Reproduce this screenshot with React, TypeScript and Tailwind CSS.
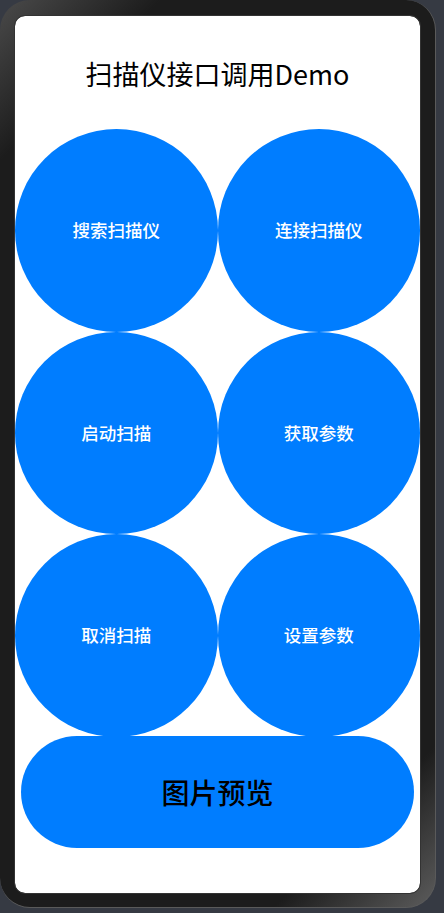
import React from "react";

const circles = ["搜索扫描仪", "连接扫描仪", "启动扫描", "获取参数", "取消扫描", "设置参数"];

const App: React.FC = () => {
	return (
		<div className="w-[444px] h-[913px] bg-[#363a43] overflow-hidden" style={{ fontFamily: '"Noto Sans CJK SC", "Noto Sans", sans-serif' }}>
			<div className="w-[436px] h-[908px] rounded-[30px] bg-[linear-gradient(135deg,#4a4a4a_0%,#1c1c1c_12%,#1c1c1c_88%,#5c5c5c_100%)] border-r border-b border-[#5a5a5a] pl-[15px] pt-[16px]">
				<div className="w-[405px] h-[877px] bg-white rounded-[10px] outline outline-1 outline-[#333] flex flex-col items-center overflow-hidden">
					<h1 className="mt-[40px] h-[36px] text-[27px] leading-[36px] text-black font-normal">扫描仪接口调用Demo</h1>
					<div className="mt-[37px] grid grid-cols-2 w-[405px]">
						{circles.map((label) => (
							<button
								key={label}
								className="w-[202.5px] h-[202.5px] rounded-full bg-[#007dff] text-white text-[17.5px] font-medium flex items-center justify-center"
							>
								{label}
							</button>
						))}
					</div>
					<button className="mt-[-1px] w-[393px] h-[112px] rounded-full bg-[#007dff] text-black text-[28px] font-medium flex items-center justify-center">
						图片预览
					</button>
				</div>
			</div>
		</div>
	);
};

export default App;
